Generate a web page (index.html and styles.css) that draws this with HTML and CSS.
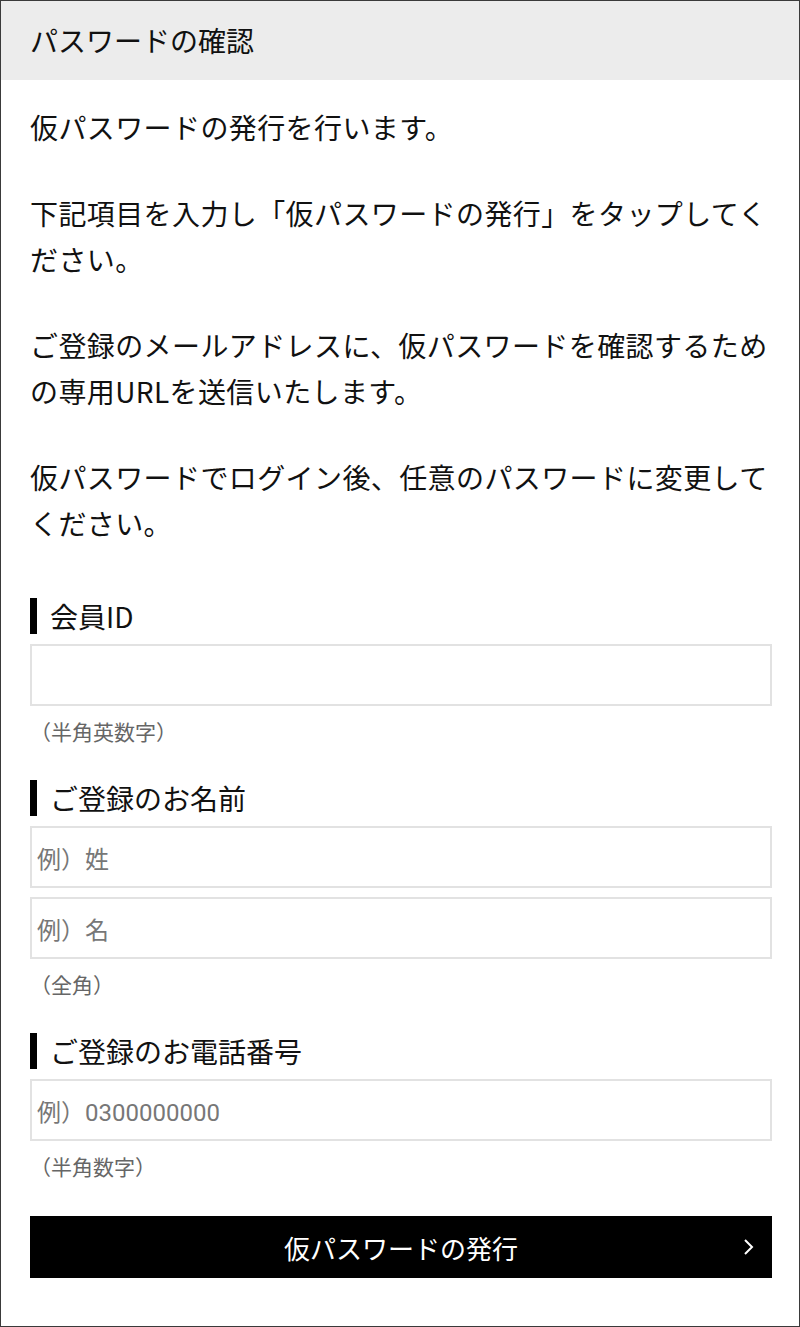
FILE: index.html
```html
<!DOCTYPE html>
<html lang="ja">
<head>
<meta charset="utf-8">
<title>パスワードの確認</title>
<link rel="stylesheet" href="styles.css">
</head>
<body>
<div class="frame">
  <header class="header">パスワードの確認</header>
  <main class="content">
    <p class="para">仮パスワードの発行を行います。</p>
    <p class="para">下記項目を入力し「仮パスワードの発行」をタップしてください。</p>
    <p class="para">ご登録のメールアドレスに、仮パスワードを確認するための専用URLを送信いたします。</p>
    <p class="para">仮パスワードでログイン後、任意のパスワードに変更してください。</p>

    <section class="field first">
      <h2 class="label">会員ID</h2>
      <div class="input"></div>
      <p class="hint">（半角英数字）</p>
    </section>

    <section class="field">
      <h2 class="label">ご登録のお名前</h2>
      <div class="input"><span class="ph">例）姓</span></div>
      <div class="input second"><span class="ph">例）名</span></div>
      <p class="hint">（全角）</p>
    </section>

    <section class="field">
      <h2 class="label">ご登録のお電話番号</h2>
      <div class="input"><span class="ph">例）0300000000</span></div>
      <p class="hint">（半角数字）</p>
    </section>

    <button class="submit" type="button">
      <span class="submit-text">仮パスワードの発行</span>
      <svg class="chev" width="12" height="18" viewBox="0 0 12 18"><polyline points="2,2 9,9 2,16" fill="none" stroke="#fff" stroke-width="2"/></svg>
    </button>
  </main>
</div>
</body>
</html>
```

FILE: styles.css
```css
* { box-sizing: border-box; }
html, body { margin: 0; padding: 0; background: #fff; }
body {
  font-family: "Noto Sans CJK JP", "Noto Sans", sans-serif;
  color: #111;
}
.frame {
  width: 800px;
  height: 1327px;
  border: 1px solid #3a3a3a;
  overflow: hidden;
}
.header {
  height: 79px;
  background: #ececec;
  font-size: 28px;
  line-height: 79px;
  padding-left: 29px;
  color: #111;
}
.content {
  padding: 24px 27px 0 29px;
}
.para {
  margin: 0 0 40px;
  font-size: 28px;
  line-height: 46px;
  letter-spacing: 0.4px;
}
.field { margin-top: 35px; }
.field.first { margin-top: 52px; }
.label {
  margin: 0;
  font-weight: normal;
  font-size: 28px;
  line-height: 36px;
  border-left: 7px solid #000;
  padding-left: 13px;
  height: 36px;
}
.input {
  margin-top: 10px;
  height: 62px;
  border: 2px solid #e2e2e2;
  display: flex;
  align-items: center;
  padding-left: 5px;
}
.input.second { margin-top: 9px; }
.ph {
  font-family: "Roboto", "Noto Sans CJK JP", sans-serif;
  font-size: 24px;
  color: #777;
}
.hint {
  margin: 12px 0 0;
  font-size: 21px;
  line-height: 27px;
  color: #666;
}
.submit {
  margin-top: 36px;
  width: 742px;
  height: 62px;
  background: #000;
  border: none;
  color: #fff;
  font-family: inherit;
  font-size: 26px;
  display: flex;
  align-items: center;
  justify-content: center;
  position: relative;
  padding: 0;
}
.chev {
  position: absolute;
  right: 17px;
  top: 22px;
}
```
